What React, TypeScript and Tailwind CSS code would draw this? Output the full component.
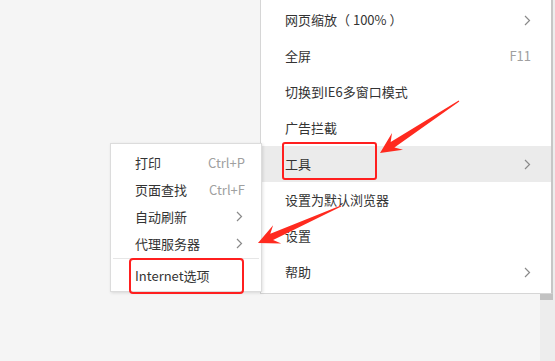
import React from "react";

const FONT = { fontFamily: '"Microsoft YaHei", "Noto Sans CJK SC", "Noto Sans", sans-serif' };

function Chevron() {
  return (
    <svg width="7" height="11" viewBox="0 0 7 11" className="shrink-0">
      <polyline points="1,1 5.5,5.5 1,10" fill="none" stroke="#8a8a8a" strokeWidth="1.2" />
    </svg>
  );
}

function arrowPoints(tx: number, ty: number, px: number, py: number) {
  const dx = px - tx;
  const dy = py - ty;
  const L = Math.hypot(dx, dy);
  const ux = dx / L;
  const uy = dy / L;
  const nx = -uy;
  const ny = ux;
  const at = (d: number, w: number) => `${(tx + ux * d + nx * w).toFixed(1)},${(ty + uy * d + ny * w).toFixed(1)}`;
  const neck = L - 15;
  const barb = L - 21;
  return [at(0, 0.6), at(neck, 3.4), at(barb, 10), at(L, 0), at(barb, -10), at(neck, -3.4), at(0, -0.6)].join(" ");
}

type MainItem = { label: string; right?: "chev" | string; active?: boolean; boxed?: boolean };

const mainItems: MainItem[] = [
  { label: "网页缩放（ 100% ）", right: "chev" },
  { label: "全屏", right: "F11" },
  { label: "切换到IE6多窗口模式" },
  { label: "广告拦截" },
  { label: "工具", right: "chev", active: true, boxed: true },
  { label: "设置为默认浏览器" },
  { label: "设置" },
  { label: "帮助", right: "chev" },
];

const subItems: { label: string; right?: "chev" | string }[] = [
  { label: "打印", right: "Ctrl+P" },
  { label: "页面查找", right: "Ctrl+F" },
  { label: "自动刷新", right: "chev" },
  { label: "代理服务器", right: "chev" },
];

export default function App() {
  return (
    <div className="relative w-[555px] h-[361px] overflow-hidden bg-[#f5f5f5]" style={FONT}>
      <div className="flex h-full justify-end">
        <div className="w-[15px] h-full bg-[#ededed]" />
      </div>

      {/* scrollbar thumb */}
      <div className="absolute left-[540px] top-[290px] w-[13px] h-[10px] bg-[#c2c2c2]" />

      {/* main menu */}
      <div className="absolute left-[260px] top-[-1px] w-[293px] h-[295px] bg-white border border-[#d6d6d6] border-r-2 border-r-[#c6c6c6] pt-[2px]">
        {mainItems.map((it) => (
          <div
            key={it.label}
            className={`relative flex items-center justify-between h-[36px] pl-[24px] pr-[20px] text-[13px] text-[#333] ${
              it.active ? "bg-[#ebebeb]" : ""
            }`}
          >
            <span>{it.label}</span>
            {it.right === "chev" ? (
              <Chevron />
            ) : it.right ? (
              <span className="text-[#a0a0a0] text-[13px]">{it.right}</span>
            ) : null}
            {it.boxed && (
              <div className="absolute left-[21px] top-[-4px] w-[95px] h-[38px] border-2 border-[#ff1f1f] rounded-[3px]" />
            )}
          </div>
        ))}
      </div>

      {/* submenu */}
      <div className="absolute left-[110px] top-[143px] w-[152px] h-[149px] bg-white border border-[#dcdcdc] shadow-[1px_1px_3px_rgba(0,0,0,0.12)] pt-[5px]">
        {subItems.map((it) => (
          <div key={it.label} className="flex items-center justify-between h-[27px] pl-[24px] pr-[17px] text-[13px] text-[#333]">
            <span>{it.label}</span>
            {it.right === "chev" ? (
              <span className="pr-[1px]">
                <Chevron />
              </span>
            ) : (
              <span className="text-[#a0a0a0] text-[13px] mr-[-1px]">{it.right}</span>
            )}
          </div>
        ))}
        <div className="mx-[2px] mt-px h-px bg-[#e6e6e6]" />
        <div className="relative mt-[2px] flex items-center h-[30px] pl-[24px] text-[13px] text-[#333]">
          <span>Internet选项</span>
          <div className="absolute left-[18px] top-[-3px] w-[115px] h-[36px] border-[2.5px] border-[#ff1f1f] rounded-[4px]" />
        </div>
      </div>

      {/* arrows */}
      <svg className="absolute left-0 top-0 pointer-events-none" width="555" height="361">
        <polygon points={arrowPoints(459, 101, 380, 153)} fill="#ff2a1f" />
        <polygon points={arrowPoints(341, 206, 258, 243)} fill="#ff2a1f" />
      </svg>
    </div>
  );
}
